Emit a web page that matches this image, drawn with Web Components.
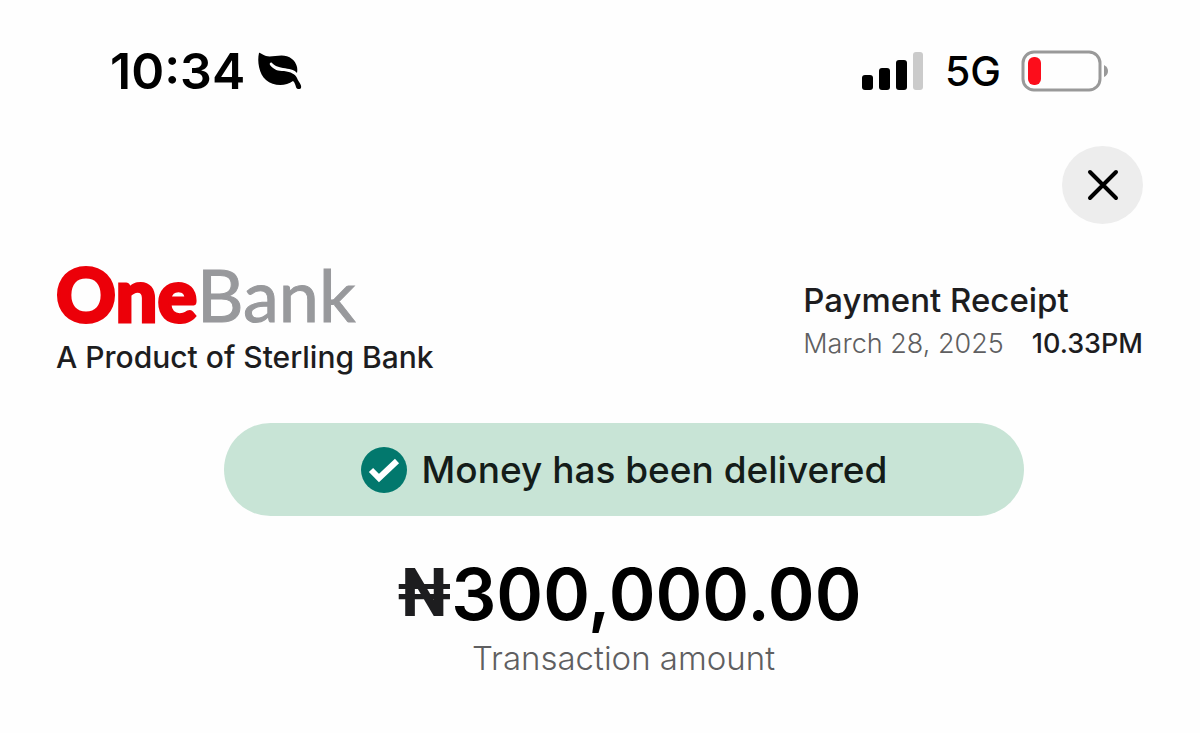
<!DOCTYPE html>
<html lang="en">
<head>
<meta charset="UTF-8">
<meta name="viewport" content="width=device-width, initial-scale=1">
<title>Payment Receipt</title>
<style>
  body {
    margin: 0;
    background: #fefefe;
    color: #1d1d1f;
    font-family: Inter, "Liberation Sans", sans-serif;
  }
</style>
</head>
<body>
<receipt-screen>
  <status-bar slot="status" time="10:34" network="5G"></status-bar>
  <close-button slot="action"></close-button>
  <bank-brand slot="header">A Product of Sterling Bank</bank-brand>
  <receipt-info slot="header" date="March 28, 2025" time="10.33PM">Payment Receipt</receipt-info>
  <delivery-status>Money has been delivered</delivery-status>
  <transaction-amount currency="₦" value="300,000.00">Transaction amount</transaction-amount>
</receipt-screen>

<script>
class ReceiptScreen extends HTMLElement {
  constructor() {
    super();
    this.attachShadow({ mode: "open" });
  }

  connectedCallback() {
    this.shadowRoot.innerHTML = `
      <style>
        :host {
          display: block;
          padding: 44px 57px 44px 56px;
        }

        .action {
          display: flex;
          justify-content: flex-end;
          margin-top: 48px;
        }

        header {
          display: flex;
          justify-content: space-between;
          align-items: flex-end;
          margin-top: 32px;
        }

        main {
          display: flex;
          flex-direction: column;
          align-items: center;
          margin-top: 46px;
          padding-left: 48px;
        }
      </style>
      <slot name="status"></slot>
      <div class="action"><slot name="action"></slot></div>
      <header><slot name="header"></slot></header>
      <main><slot></slot></main>
    `;
  }
}

class StatusBar extends HTMLElement {
  constructor() {
    super();
    this.attachShadow({ mode: "open" });
  }

  connectedCallback() {
    this.shadowRoot.innerHTML = `
      <style>
        :host {
          display: flex;
          justify-content: space-between;
          align-items: center;
          height: 54px;
          padding: 0 34px 0 54px;
          color: #000;
        }

        .left, .right {
          display: flex;
          align-items: center;
        }

        .left { gap: 12px; }
        .right { gap: 20px; }

        .time {
          font-size: 50px;
          font-weight: 600;
        }

        .network {
          font-size: 41px;
          font-weight: 500;
        }

        svg { display: block; }
      </style>
      <div class="left">
        <span class="time">${this.getAttribute("time")}</span>
        <svg width="46" height="40" viewBox="0 0 46 40" aria-hidden="true">
          <path fill="#000" d="M2 2C3 1 5 4 9 5C16 7 27 1 35 8C40 12 41 18 40 22C37 18 32 18 26 17C20 16 17 14 15 12C14 11 12 12 13 14C17 19 21 20 27 20C34 21 38 23 40 27C41 30 45 34 44 37C43 39 39 38 39 36C38 33 38 32 36 30C28 36 16 35 9 29C2 23 0 10 2 2Z"/>
        </svg>
      </div>
      <div class="right">
        <svg width="64" height="40" viewBox="0 0 64 40" aria-hidden="true">
          <rect x="1" y="24" width="11" height="15" rx="3"/>
          <rect x="18" y="17" width="11" height="22" rx="3"/>
          <rect x="35" y="9" width="11" height="30" rx="3"/>
          <rect x="52" y="1" width="10" height="38" rx="3" fill="#cbcbcb"/>
        </svg>
        <span class="network">${this.getAttribute("network")}</span>
        <svg width="88" height="42" viewBox="0 0 88 42" aria-hidden="true">
          <rect x="2" y="2" width="77" height="38" rx="11" fill="none" stroke="#999" stroke-width="3"/>
          <rect x="7" y="7" width="13" height="28" rx="6" fill="#fc0d1b"/>
          <path d="M83 15Q87 17 87 21Q87 25 83 27Z" fill="#999"/>
        </svg>
      </div>
    `;
  }
}

class CloseButton extends HTMLElement {
  constructor() {
    super();
    this.attachShadow({ mode: "open" });
  }

  connectedCallback() {
    this.shadowRoot.innerHTML = `
      <style>
        :host { display: block; }

        button {
          display: grid;
          place-items: center;
          width: 81px;
          height: 78px;
          padding: 0;
          border: none;
          border-radius: 50%;
          background: #ededed;
          cursor: pointer;
        }
      </style>
      <button type="button" aria-label="Close">
        <svg width="32" height="32" viewBox="0 0 32 32">
          <path d="M3 3L29 29M29 3L3 29" stroke="#000" stroke-width="4" stroke-linecap="round"/>
        </svg>
      </button>
    `;
  }
}

class BankBrand extends HTMLElement {
  constructor() {
    super();
    this.attachShadow({ mode: "open" });
  }

  connectedCallback() {
    this.shadowRoot.innerHTML = `
      <style>
        :host { display: block; }

        .logo {
          padding-bottom: 5px;
          font-family: Lato, "Open Sans", sans-serif;
          font-size: 72px;
          line-height: 76px;
          color: #98999c;
          -webkit-text-stroke: 1px #98999c;
        }

        .logo b {
          font-size: 74px;
          font-weight: 900;
          color: #ec0009;
          -webkit-text-stroke: 3px #ec0009;
        }

        .tagline {
          font-size: 30px;
          font-weight: 500;
          line-height: 40px;
        }
      </style>
      <div class="logo"><b>One</b>Bank</div>
      <div class="tagline"><slot></slot></div>
    `;
  }
}

class ReceiptInfo extends HTMLElement {
  constructor() {
    super();
    this.attachShadow({ mode: "open" });
  }

  connectedCallback() {
    this.shadowRoot.innerHTML = `
      <style>
        :host {
          display: block;
          margin-bottom: 11px;
        }

        .title {
          font-size: 33px;
          font-weight: 500;
          line-height: 44px;
        }

        .when {
          display: flex;
          gap: 28px;
          font-size: 27px;
          line-height: 44px;
        }

        .date {
          font-weight: 300;
          color: #5f5f61;
        }

        .time { font-weight: 500; }
      </style>
      <div class="title"><slot></slot></div>
      <div class="when">
        <span class="date">${this.getAttribute("date")}</span>
        <span class="time">${this.getAttribute("time")}</span>
      </div>
    `;
  }
}

class DeliveryStatus extends HTMLElement {
  constructor() {
    super();
    this.attachShadow({ mode: "open" });
  }

  connectedCallback() {
    this.shadowRoot.innerHTML = `
      <style>
        :host {
          display: flex;
          justify-content: center;
          align-items: center;
          gap: 14px;
          box-sizing: border-box;
          width: 100%;
          max-width: 800px;
          padding: 22px 24px;
          border-radius: 48px;
          background: #c8e4d6;
          color: #141c19;
          font-size: 37px;
          font-weight: 500;
          line-height: 49px;
        }

        svg { flex: none; }
      </style>
      <svg width="48" height="48" viewBox="0 0 48 48" aria-hidden="true">
        <circle cx="24" cy="24" r="23" fill="#02786d"/>
        <path d="M11 24L19 32L37 15" fill="none" stroke="#fff" stroke-width="6"/>
      </svg>
      <span><slot></slot></span>
    `;
  }
}

class TransactionAmount extends HTMLElement {
  constructor() {
    super();
    this.attachShadow({ mode: "open" });
  }

  connectedCallback() {
    this.shadowRoot.innerHTML = `
      <style>
        :host {
          display: block;
          margin-top: 36px;
          text-align: center;
        }

        .amount {
          display: flex;
          justify-content: center;
          align-items: center;
          padding-left: 12px;
          font-size: 71px;
          font-weight: 600;
          line-height: 84px;
          color: #000;
        }

        .currency {
          font-family: Roboto, sans-serif;
          font-size: 66px;
          font-weight: 700;
          color: #1d1d1f;
        }

        .label {
          font-size: 33px;
          font-weight: 300;
          line-height: 44px;
          color: #5f5f61;
        }
      </style>
      <div class="amount"><span class="currency">${this.getAttribute("currency")}</span><span>${this.getAttribute("value")}</span></div>
      <div class="label"><slot></slot></div>
    `;
  }
}

customElements.define("receipt-screen", ReceiptScreen);
customElements.define("status-bar", StatusBar);
customElements.define("close-button", CloseButton);
customElements.define("bank-brand", BankBrand);
customElements.define("receipt-info", ReceiptInfo);
customElements.define("delivery-status", DeliveryStatus);
customElements.define("transaction-amount", TransactionAmount);
</script>
</body>
</html>
